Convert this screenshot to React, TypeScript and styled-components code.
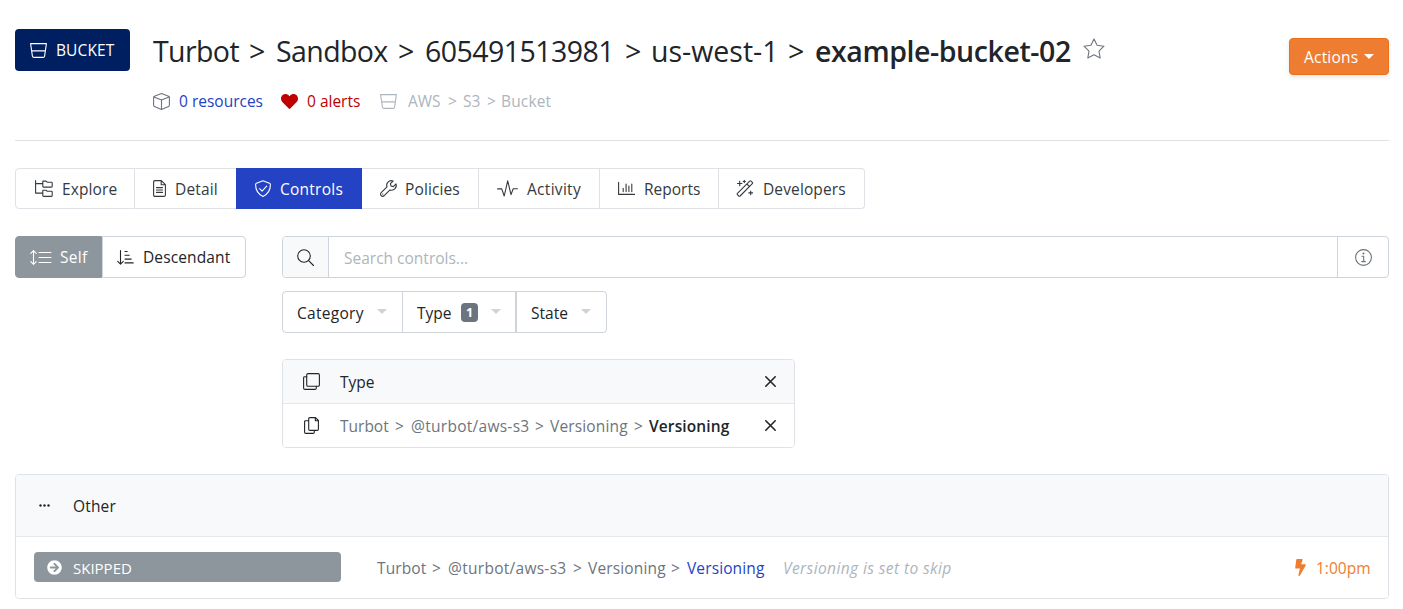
import React from 'react';
import styled, { createGlobalStyle } from 'styled-components';
import { FaHeart, FaBolt, FaArrowCircleRight } from 'react-icons/fa';

const GlobalStyle = createGlobalStyle`
  * { box-sizing: border-box; }
  body {
    margin: 0;
    background: #fff;
    color: #212529;
    font-family: 'Open Sans', 'Noto Sans', sans-serif;
    font-size: 15.5px;
    line-height: 24px;
  }
`;

const Page = styled.main`
  display: flex;
  flex-direction: column;
  width: 1403px;
  height: 609px;
  padding: 29px 14px 0 15px;
  overflow: hidden;
`;

const Text = styled.span<{ $w?: number; $ls?: number; $color?: string; $bold?: boolean }>`
  display: inline-block;
  flex: none;
  text-align: left;
  white-space: nowrap;
  width: ${(p) => (p.$w ? `${p.$w}px` : 'auto')};
  letter-spacing: ${(p) => p.$ls ?? 0}px;
  color: ${(p) => p.$color ?? 'inherit'};
  font-weight: ${(p) => (p.$bold ? 600 : 400)};
`;

const Svg = styled.svg<{ $stroke?: number }>`
  display: block;
  flex: none;
  fill: none;
  stroke: currentColor;
  stroke-width: ${(p) => p.$stroke ?? 1.1};
  stroke-linecap: round;
  stroke-linejoin: round;
  overflow: visible;
`;

type IconProps = { w?: number; h?: number; stroke?: number; children?: React.ReactNode };
const Icon = ({ w = 17, h = 17, stroke, children }: IconProps) => (
  <Svg width={w} height={h} viewBox={`0 0 ${w} ${h}`} $stroke={stroke}>
    {children}
  </Svg>
);

const BucketIcon = () => (
  <Icon w={17} h={15}>
    <path d="M.6.6h15.8l-1.8 12.5a1.6 1.6 0 0 1-1.6 1.3H4a1.6 1.6 0 0 1-1.6-1.3zM1.7 7.9h13.6" />
  </Icon>
);
const CubeIcon = () => (
  <Icon>
    <path d="M8.5.6l7.1 2.7q.8.3.8 1.1v7.9q0 .8-.8 1.1l-7.1 3-7.1-3q-.8-.3-.8-1.1V4.4q0-.8.8-1.1zM.9 3.9l7.6 3 7.6-3M8.5 6.9v9.5" />
  </Icon>
);
const StarIcon = () => (
  <Icon w={22} h={21}>
    <path d="M11 .9l3.1 6.3 6.9 1-5 4.9 1.2 6.9L11 16.7 4.8 20 6 13.1 1 8.2l6.9-1z" />
  </Icon>
);
const ExploreIcon = () => (
  <Icon w={18}>
    <path d="M.6.6V13.1H7M.6 3.6H7M8 1.1h3l1.2 1.1h4.2q.8 0 .8.8v3.3q0 .8-.8.8H8.600q-.8 0-.8-.8V1.9q0-.8.2-.8zM8 10.2h3l1.2 1.1h4.2q.8 0 .8.8v3.5q0 .8-.8.8H8.600q-.8 0-.8-.8V11q0-.8.2-.8z" />
  </Icon>
);
const DetailIcon = () => (
  <Icon w={13}>
    <path d="M2 .6h6.300l4.1 4.1V15q0 1.400-1.400 1.400H2Q.6 16.400.6 15V2Q.6.600 2 .6zM8.200.9v3.9h3.9M3.500 7.600h6M3.500 10h6M3.500 12.400h6" />
  </Icon>
);
const ShieldIcon = () => (
  <Icon w={16}>
    <path d="M8 .7l6.500 2.600q.9.400.9 1.300c0 5.300-2.600 9.700-7.400 11.800C3.200 14.300.6 9.900.6 4.600q0-.9.900-1.300zM4.600 8.600l2.500 2.500 4.600-5" />
  </Icon>
);
const WrenchIcon = () => (
  <Icon>
    <path d="M16 3.900l-2.700 2.700-2.300-.600-.6-2.300L13.100 1C11.300.300 9.300.800 8 2.100 6.700 3.400 6.400 5.300 7 6.900L1.200 12.700a2 2 0 0 0 0 3 2 2 0 0 0 3 0L10 9.900c1.700.600 3.500.300 4.800-1 1.400-1.300 1.800-3.300 1.200-5zM2.800 14.100h.1" />
  </Icon>
);
const ActivityIcon = () => (
  <Icon w={21}>
    <path d="M.6 8.900h4.100L7.200 16l3.500-15.200L14 14.600l2.200-5.900h4.200" />
  </Icon>
);
const ReportsIcon = () => (
  <Icon w={17} h={13}>
    <path d="M.6.400v12h16M5.200 6.300v3.300M8.100 2v7.600M10.900 4v5.600M13.800 2v7.600" />
  </Icon>
);
const WandIcon = () => (
  <Icon w={18}>
    <path d="M1.400 13.300L13.700 1.100q.7-.6 1.400 0l1.200 1.200q.7.700 0 1.400L4.100 16q-.7.600-1.400 0l-1.300-1.300q-.6-.7 0-1.400zM10.900 4l2.600 2.600M3.700 1.300v4.400M1.500 3.500h4.400M8.300.400v2.200M7.200 1.500h2.200M14.700 11v3.800M12.800 12.900h3.800" />
  </Icon>
);
const SelfIcon = () => (
  <Icon w={22} h={15}>
    <path d="M3.500.7v13.600M.8 3.400L3.500.700l2.700 2.700M.8 11.600l2.700 2.700 2.700-2.700M9 2.500h12M9 7.500h12M9 12.500h12" />
  </Icon>
);
const DescendantIcon = () => (
  <Icon w={17} h={15}>
    <path d="M3.500.5v13.500M.7 11.300l2.800 2.800 2.800-2.800M8 1.500h2.200M8 5.300h4.200M8 9.100h6.200M8 12.900h8.200" />
  </Icon>
);
const SearchIcon = () => (
  <Icon>
    <circle cx="7" cy="7" r="6.3" />
    <path d="M11.600 11.600l4.900 4.900" />
  </Icon>
);
const InfoIcon = () => (
  <Icon>
    <circle cx="8.5" cy="8.5" r="7.9" />
    <path d="M7 7.200h1.700v5.300M6.800 12.600h3.600" />
    <circle cx="8.5" cy="4.5" r=".5" fill="currentColor" />
  </Icon>
);
const CloneIcon = () => (
  <Icon>
    <rect x="3.7" y=".6" width="12.7" height="12.7" rx="1.3" />
    <path d="M3.700 3.700H2Q.6 3.700.6 5v10q0 1.400 1.400 1.400h10q1.300 0 1.300-1.400v-1.700" />
  </Icon>
);
const CopyIcon = () => (
  <Icon w={15}>
    <path d="M5.900.6h5.600l2.900 2.900v8.700q0 1.200-1.200 1.200H5.900q-1.200 0-1.200-1.200V1.800Q4.700.600 5.900.6zM11.300.8v3h2.900M4.700 3.700H1.800Q.6 3.700.6 4.900v10.300q0 1.200 1.200 1.200h7.300q1.200 0 1.200-1.200v-1.800" />
  </Icon>
);
const CloseIcon = () => (
  <Icon w={11} h={11} stroke={1.6}>
    <path d="M.8.8l9.400 9.400M10.200.8L.8 10.200" />
  </Icon>
);
const DotsIcon = () => (
  <Icon w={11} h={3}>
    <g fill="currentColor" stroke="none">
      <circle cx="1.5" cy="1.5" r="1.2" />
      <circle cx="5.500" cy="1.5" r="1.2" />
      <circle cx="9.500" cy="1.5" r="1.2" />
    </g>
  </Icon>
);

const Caret = styled.i<{ $color: string }>`
  flex: none;
  border: 5px solid transparent;
  border-top-color: ${(p) => p.$color};
  border-bottom: 0;
`;

const Header = styled.header`
  display: flex;
  align-items: flex-start;
  height: 112px;
  border-bottom: 1px solid #dfe1e3;
`;
const KindBadge = styled.div`
  display: flex;
  align-items: center;
  gap: 9px;
  width: 115px;
  height: 42px;
  padding-left: 15px;
  border-radius: 4px;
  background: #001f60;
  color: #fff;
`;
const Heading = styled.div`
  flex: 1;
  padding-left: 23px;
`;
const Title = styled.h1`
  display: flex;
  align-items: center;
  height: 45px;
  margin: 0;
  font-size: 28.5px;
  line-height: 45px;
  font-weight: 400;
`;
const StarSlot = styled.span`
  display: flex;
  padding-bottom: 6px;
  color: #6c757d;
`;
const Meta = styled.div`
  display: flex;
  align-items: center;
  height: 24px;
  margin-top: 15px;
`;
const MetaItem = styled.div<{ $color: string; $w: number; $gap: number }>`
  display: flex;
  align-items: center;
  width: ${(p) => p.$w}px;
  color: ${(p) => p.$color};
  > :first-child { margin-right: ${(p) => p.$gap}px; }
`;
const Tint = styled.span<{ $color: string }>`
  display: flex;
  color: ${(p) => p.$color};
`;
const ActionsButton = styled.button`
  display: flex;
  align-items: center;
  width: 100px;
  height: 37px;
  margin-top: 9px;
  padding: 0 0 0 14px;
  border: 1px solid #ec7019;
  border-radius: 4px;
  background: #ee7d31;
  box-shadow: 0 2px 4px rgba(0, 0, 0, 0.1);
  color: #fff;
  font: inherit;
`;

const Tabs = styled.nav`
  display: flex;
  width: 850px;
  height: 41px;
  margin-top: 27px;
`;
const Tab = styled.a<{ $w: number; $pad: number; $gap: number; $active?: boolean }>`
  display: flex;
  align-items: center;
  width: ${(p) => p.$w}px;
  padding-left: ${(p) => p.$pad}px;
  gap: ${(p) => p.$gap}px;
  border: solid ${(p) => (p.$active ? '#2442c4' : '#dee2e6')};
  border-width: 1px 1px 1px 0;
  background: ${(p) => (p.$active ? '#2442c4' : '#fff')};
  color: ${(p) => (p.$active ? '#fff' : '#343a40')};
  &:first-child {
    border-left-width: 1px;
    border-radius: 4px 0 0 4px;
  }
  &:last-child { border-radius: 0 4px 4px 0; }
  &:nth-child(2) { border-right: 0; }
`;

const Body = styled.div`
  display: flex;
  gap: 36px;
  margin-top: 27px;
`;
const Toggle = styled.div`
  display: flex;
  width: 231px;
  height: 42px;
`;
const ToggleButton = styled.button<{ $w: number; $gap: number; $active?: boolean }>`
  display: flex;
  align-items: center;
  gap: ${(p) => p.$gap}px;
  width: ${(p) => p.$w}px;
  padding: 0 0 0 14px;
  border: 1px solid ${(p) => (p.$active ? '#8d969d' : '#ced4da')};
  border-radius: ${(p) => (p.$active ? '4px 0 0 4px' : '0 4px 4px 0')};
  background: ${(p) => (p.$active ? '#8d969d' : '#fff')};
  color: ${(p) => (p.$active ? '#fff' : '#212529')};
  font: inherit;
`;
const Filters = styled.section`
  flex: 1;
`;
const SearchBar = styled.div`
  display: flex;
  height: 42px;
  border: 1px solid #ced4da;
  border-radius: 4px;
  overflow: hidden;
`;
const SearchAddon = styled.div`
  display: flex;
  align-items: center;
  width: 46px;
  padding-left: 14px;
  border-right: 1px solid #ced4da;
  background: #f8f9fa;
`;
const SearchField = styled.div`
  display: flex;
  align-items: center;
  flex: 1;
  padding: 2px 0 0 15px;
  color: #adb5bd;
`;
const InfoButton = styled.div`
  display: flex;
  align-items: center;
  width: 51px;
  padding-left: 17px;
  border-left: 1px solid #ced4da;
  color: #6c757d;
`;
const FilterGroup = styled.div`
  display: flex;
  width: 325px;
  height: 42px;
  margin-top: 13px;
  border: 1px solid #ced4da;
  border-radius: 4px;
`;
const FilterButton = styled.div<{ $w: number; $rule?: number }>`
  display: flex;
  align-items: center;
  width: ${(p) => p.$w}px;
  padding-left: 14px;
  border-right: ${(p) => p.$rule ?? 0}px solid #ced4da;
  > ${Text} { padding-top: 2px; }
  > ${Caret} { margin-bottom: 1px; }
`;
const CountBadge = styled.span`
  width: 17px;
  height: 19px;
  margin: 0 13px 0 9px;
  border-radius: 4px;
  background: #6c757d;
  color: #fff;
  font-size: 12.5px;
  font-weight: 700;
  line-height: 19px;
  text-align: center;
`;

const Card = styled.section<{ $w: number; $top: number }>`
  flex: none;
  width: ${(p) => p.$w}px;
  margin-top: ${(p) => p.$top}px;
  border: 1px solid #dee2e6;
  border-radius: 4px;
`;
const CardRow = styled.div<{ $h: number; $pad: number; $head?: boolean }>`
  display: flex;
  align-items: center;
  height: ${(p) => p.$h}px;
  padding-left: ${(p) => p.$pad}px;
  border-bottom: ${(p) => (p.$head ? '1px solid #e6e8eb' : '0')};
  border-radius: ${(p) => (p.$head ? '3px 3px 0 0' : '0 0 3px 3px')};
  background: ${(p) => (p.$head ? '#f8f9fb' : '#fff')};
`;
const IconSlot = styled.span<{ $w: number; $left?: number }>`
  display: flex;
  width: ${(p) => p.$w}px;
  margin-left: ${(p) => p.$left ?? 0}px;
`;
const Push = styled.span<{ $right: number }>`
  display: flex;
  align-items: center;
  margin-left: auto;
  margin-right: ${(p) => p.$right}px;
`;
const StatePill = styled.div`
  display: flex;
  align-items: center;
  gap: 11px;
  width: 307px;
  height: 30px;
  margin: 0 36px 1px 0;
  padding-left: 13px;
  border-radius: 4px;
  background: #8d969d;
  color: #fff;
  font-size: 15px;
  > ${Text} { padding-top: 1px; }
`;
const Note = styled(Text)`
  font-style: italic;
`;

const tabs = [
  { label: 'Explore', icon: <ExploreIcon />, w: 120, pad: 19, gap: 9, ls: 0.1 },
  { label: 'Detail', icon: <DetailIcon />, w: 101, pad: 18, gap: 9, ls: 0.15 },
  { label: 'Controls', icon: <ShieldIcon />, w: 126, pad: 19, gap: 9, ls: 0.25, active: true },
  { label: 'Policies', icon: <WrenchIcon />, w: 117, pad: 18, gap: 8, ls: 0.12 },
  { label: 'Activity', icon: <ActivityIcon />, w: 121, pad: 18, gap: 9, ls: 0.3 },
  { label: 'Reports', icon: <ReportsIcon />, w: 119, pad: 18, gap: 9, ls: 0 },
  { label: 'Developers', icon: <WandIcon />, w: 146, pad: 17, gap: 9, ls: 0.12 },
];

const grey = '#6c757d';

export default function App() {
  return (
    <>
      <GlobalStyle />
      <Page>
        <Header>
          <KindBadge>
            <BucketIcon />
            <Text $ls={0.1}>BUCKET</Text>
          </KindBadge>
          <Heading>
            <Title>
              <Text $w={96} $ls={-0.6}>Turbot</Text>
              <Text $w={27}>&gt;</Text>
              <Text $w={122} $ls={-0.6}>Sandbox</Text>
              <Text $w={27}>&gt;</Text>
              <Text $w={200} $ls={-0.55}>605491513981</Text>
              <Text $w={26}>&gt;</Text>
              <Text $w={137}>us-west-1</Text>
              <Text $w={27}>&gt;</Text>
              <Text $w={268} $ls={-0.42} $bold>example-bucket-02</Text>
              <StarSlot><StarIcon /></StarSlot>
            </Title>
            <Meta>
              <MetaItem $color="#2442c4" $w={128} $gap={9}>
                <Tint $color={grey}><CubeIcon /></Tint>
                <Text>0 resources</Text>
              </MetaItem>
              <MetaItem $color="#c00000" $w={99} $gap={9}>
                <FaHeart size={17} />
                <Text>0 alerts</Text>
              </MetaItem>
              <MetaItem $color="#adb5bd" $w={180} $gap={11}>
                <BucketIcon />
                <Text $w={40}>AWS</Text>
                <Text $w={15}>&gt;</Text>
                <Text $w={24}>S3</Text>
                <Text $w={14}>&gt;</Text>
                <Text $ls={0.15}>Bucket</Text>
              </MetaItem>
            </Meta>
          </Heading>
          <ActionsButton>
            <Text $w={60} $ls={0.2}>Actions</Text>
            <Caret $color="#fff" />
          </ActionsButton>
        </Header>

        <Tabs>
          {tabs.map((t) => (
            <Tab key={t.label} $w={t.w} $pad={t.pad} $gap={t.gap} $active={t.active}>
              {t.icon}
              <Text $ls={t.ls}>{t.label}</Text>
            </Tab>
          ))}
        </Tabs>

        <Body>
          <Toggle>
            <ToggleButton $w={87} $gap={8} $active>
              <SelfIcon />
              <Text $ls={0.3}>Self</Text>
            </ToggleButton>
            <ToggleButton $w={144} $gap={9}>
              <DescendantIcon />
              <Text $ls={0.12}>Descendant</Text>
            </ToggleButton>
          </Toggle>
          <Filters>
            <SearchBar>
              <SearchAddon><SearchIcon /></SearchAddon>
              <SearchField><Text>Search controls...</Text></SearchField>
              <InfoButton><InfoIcon /></InfoButton>
            </SearchBar>
            <FilterGroup>
              <FilterButton $w={120} $rule={1}>
                <Text $w={80} $ls={0.28}>Category</Text>
                <Caret $color="#ced4da" />
              </FilterButton>
              <FilterButton $w={114} $rule={2}>
                <Text $w={35}>Type</Text>
                <CountBadge>1</CountBadge>
                <Caret $color="#ced4da" />
              </FilterButton>
              <FilterButton $w={89}>
                <Text $w={50}>State</Text>
                <Caret $color="#ced4da" />
              </FilterButton>
            </FilterGroup>
            <Card $w={513} $top={26}>
              <CardRow $h={44} $pad={20} $head>
                <IconSlot $w={37}><CloneIcon /></IconSlot>
                <Text>Type</Text>
                <Push $right={18}><CloseIcon /></Push>
              </CardRow>
              <CardRow $h={43} $pad={21}>
                <IconSlot $w={36}><CopyIcon /></IconSlot>
                <Text $w={55} $color={grey}>Turbot</Text>
                <Text $w={16} $color={grey}>&gt;</Text>
                <Text $w={124} $ls={0.28} $color={grey}>@turbot/aws-s3</Text>
                <Text $w={15} $color={grey}>&gt;</Text>
                <Text $w={84} $ls={0.15} $color={grey}>Versioning</Text>
                <Text $w={15} $color={grey}>&gt;</Text>
                <Text $ls={0.12} $bold>Versioning</Text>
                <Push $right={18}><CloseIcon /></Push>
              </CardRow>
            </Card>
          </Filters>
        </Body>

        <Card $w={1374} $top={26}>
          <CardRow $h={62} $pad={23} $head>
            <IconSlot $w={34}><DotsIcon /></IconSlot>
            <Text $ls={0.15}>Other</Text>
          </CardRow>
          <CardRow $h={61} $pad={18}>
            <StatePill>
              <FaArrowCircleRight size={15} />
              <Text>SKIPPED</Text>
            </StatePill>
            <Text $w={55} $ls={0.1} $color={grey}>Turbot</Text>
            <Text $w={16} $color={grey}>&gt;</Text>
            <Text $w={125} $ls={0.28} $color={grey}>@turbot/aws-s3</Text>
            <Text $w={15} $color={grey}>&gt;</Text>
            <Text $w={83} $ls={0.15} $color={grey}>Versioning</Text>
            <Text $w={16} $color={grey}>&gt;</Text>
            <Text $w={96} $ls={0.12} $color="#2442c4">Versioning</Text>
            <Note $ls={0.4} $color="#adb5bd">Versioning is set to skip</Note>
            <Push $right={18}>
              <Tint $color="#ee7d31"><FaBolt size={17} /></Tint>
              <IconSlot $w={54} $left={7}><Text $color="#ee7d31">1:00pm</Text></IconSlot>
            </Push>
          </CardRow>
        </Card>
      </Page>
    </>
  );
}
